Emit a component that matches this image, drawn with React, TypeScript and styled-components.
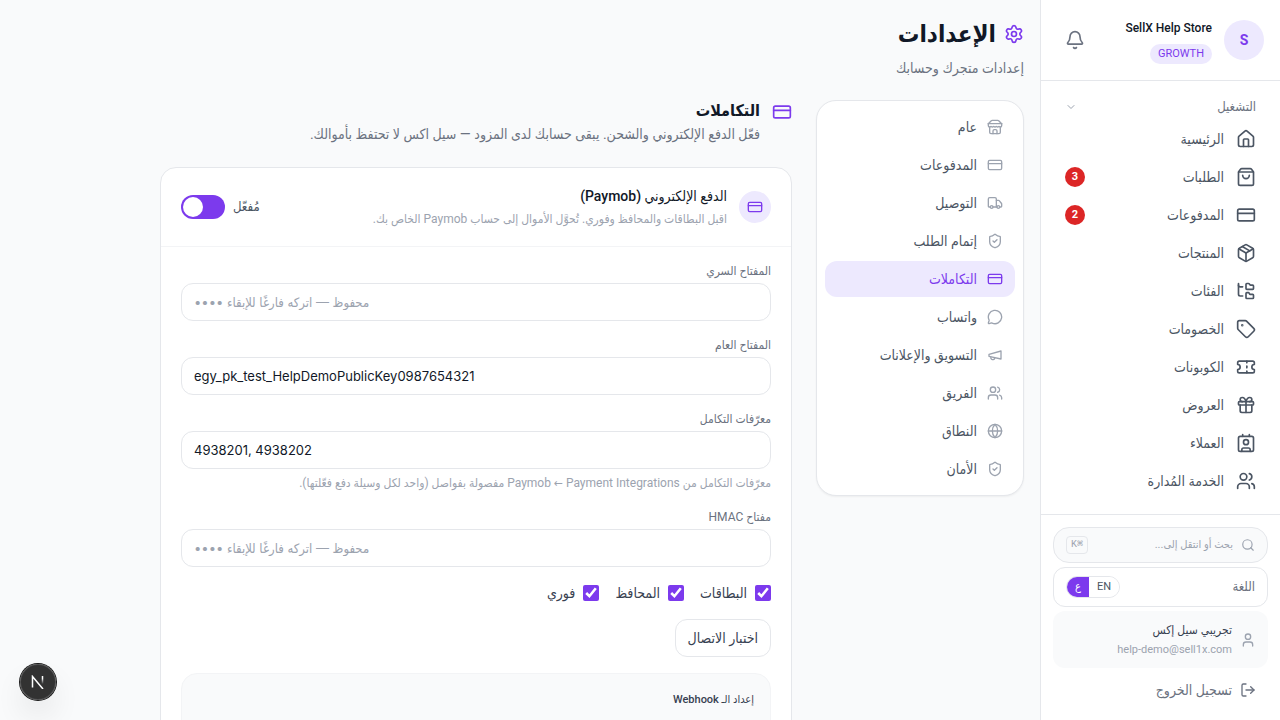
import React from 'react';
import styled, { createGlobalStyle } from 'styled-components';
import {
  Bell,
  ChevronDown,
  Contact,
  CreditCard,
  FolderTree,
  Gift,
  Globe,
  House,
  LogOut,
  MessageCircle,
  Package,
  Search,
  Settings,
  ShieldCheck,
  ShoppingBag,
  Tag,
  Ticket,
  Truck,
  User,
  Users,
} from 'lucide-react';

const violet = '#7c3aed';
const violetSoft = '#ede9fe';
const ink = '#111827';
const gray700 = '#374151';
const gray600 = '#4b5563';
const gray500 = '#6b7280';
const gray400 = '#9ca3af';
const line = '#e5e7eb';
const surface = '#f9fafb';

const GlobalStyle = createGlobalStyle`
  *, *::before, *::after { box-sizing: border-box; }
  body {
    margin: 0;
    background: ${surface};
    color: ${ink};
    font-family: Roboto, 'DejaVu Sans Condensed', 'DejaVu Sans', sans-serif;
    font-size: 14px;
    line-height: 20px;
  }
  button, input { font: inherit; color: inherit; }
  h1, h2, h3, h4, p, ul { margin: 0; padding: 0; }
  ul { list-style: none; }
  a { color: inherit; text-decoration: none; }
`;

type IconProps = { size?: number };

const StrokeIcon = ({ size = 16, children }: IconProps & { children: React.ReactNode }) => (
  <svg
    width={size}
    height={size}
    viewBox="0 0 24 24"
    fill="none"
    stroke="currentColor"
    strokeWidth="2"
    strokeLinecap="round"
    strokeLinejoin="round"
    aria-hidden="true"
  >
    {children}
  </svg>
);

const StoreIcon = ({ size }: IconProps) => (
  <StrokeIcon size={size}>
    <path d="m2 7 4.41-4.41A2 2 0 0 1 7.83 2h8.34a2 2 0 0 1 1.42.59L22 7" />
    <path d="M4 12v8a2 2 0 0 0 2 2h12a2 2 0 0 0 2-2v-8" />
    <path d="M15 22v-4a2 2 0 0 0-2-2h-2a2 2 0 0 0-2 2v4" />
    <path d="M2 7h20" />
    <path d="M22 7v3a2 2 0 0 1-2 2a2.7 2.7 0 0 1-1.59-.63.7.7 0 0 0-.82 0A2.7 2.7 0 0 1 16 12a2.7 2.7 0 0 1-1.59-.63.7.7 0 0 0-.82 0A2.7 2.7 0 0 1 12 12a2.7 2.7 0 0 1-1.59-.63.7.7 0 0 0-.82 0A2.7 2.7 0 0 1 8 12a2.7 2.7 0 0 1-1.59-.63.7.7 0 0 0-.82 0A2.7 2.7 0 0 1 4 12a2 2 0 0 1-2-2V7" />
  </StrokeIcon>
);

const MegaphoneIcon = ({ size }: IconProps) => (
  <StrokeIcon size={size}>
    <path d="m3 11 18-5v12L3 14v-3z" />
    <path d="M11.6 16.8a3 3 0 1 1-5.8-1.6" />
  </StrokeIcon>
);

const Shell = styled.div`
  display: flex;
  height: 100vh;
  overflow: hidden;
`;

const Sidebar = styled.aside`
  flex: 0 0 240px;
  display: flex;
  flex-direction: column;
  background: #fff;
  border-left: 1px solid ${line};
`;

const StoreHeader = styled.header`
  display: flex;
  align-items: center;
  gap: 12px;
  padding: 16px 16px 16px 20px;
  height: 81px;
  border-bottom: 1px solid ${line};
`;

const Avatar = styled.span`
  display: grid;
  place-items: center;
  width: 40px;
  height: 40px;
  border-radius: 50%;
  background: ${violetSoft};
  color: ${violet};
  font-weight: 700;
`;

const StoreMeta = styled.div`
  flex: 1;
  display: flex;
  flex-direction: column;
  align-items: flex-start;
  gap: 4px;
`;

const StoreName = styled.strong`
  font-size: 12px;
  line-height: 24px;
  font-weight: 500;
`;

const Plan = styled.span`
  padding: 0 8px;
  border-radius: 10px;
  background: ${violetSoft};
  color: ${violet};
  font-size: 11px;
`;

const BellButton = styled.button`
  display: grid;
  place-items: center;
  width: 28px;
  height: 28px;
  padding: 0;
  border: 0;
  background: none;
  color: ${gray500};
`;

const MainNav = styled.nav`
  flex: 1;
  min-height: 0;
  overflow: hidden;
  padding: 12px;
`;

const GroupToggle = styled.button`
  display: flex;
  align-items: center;
  justify-content: space-between;
  width: 100%;
  height: 28px;
  padding: 0 12px;
  border: 0;
  background: none;
  color: ${gray500};
  font-size: 13px;
  svg { color: ${gray400}; }
`;

const NavList = styled.ul`
  display: flex;
  flex-direction: column;
  gap: 2px;
`;

const NavLink = styled.a`
  display: flex;
  align-items: center;
  gap: 12px;
  height: 36px;
  padding: 0 12px;
  border-radius: 12px;
  color: ${gray600};
`;

const Count = styled.span`
  display: grid;
  place-items: center;
  width: 20px;
  height: 20px;
  margin-right: auto;
  border-radius: 50%;
  background: #dc2626;
  color: #fff;
  font-size: 11px;
  font-weight: 700;
`;

const SidebarFooter = styled.footer`
  display: flex;
  flex-direction: column;
  gap: 4px;
  padding: 12px;
  border-top: 1px solid ${line};
`;

const SearchButton = styled.button`
  display: flex;
  align-items: center;
  gap: 8px;
  height: 36px;
  padding: 0 12px;
  border: 1px solid ${line};
  border-radius: 16px;
  background: ${surface};
  color: ${gray400};
  font-size: 11px;
`;

const Shortcut = styled.kbd`
  display: grid;
  place-items: center;
  height: 18px;
  margin-right: auto;
  padding: 0 4px;
  border: 1px solid ${line};
  border-radius: 4px;
  font-family: 'Liberation Mono', 'DejaVu Sans Mono', monospace;
  font-size: 10px;
  line-height: 16px;
`;

const LanguageRow = styled.div`
  display: flex;
  align-items: center;
  justify-content: space-between;
  height: 40px;
  padding: 0 12px;
  border: 1px solid ${line};
  border-radius: 12px;
  color: ${gray500};
  font-size: 13px;
`;

const LanguageSwitch = styled.div`
  display: flex;
  height: 22px;
  border: 1px solid ${line};
  border-radius: 11px;
  overflow: hidden;
`;

const LanguageOption = styled.button<{ $on?: boolean }>`
  padding: 0 8px;
  border: 0;
  background: ${({ $on }) => ($on ? violet : '#fff')};
  color: ${({ $on }) => ($on ? '#fff' : gray600)};
  font-size: 11px;
  line-height: 20px;
`;

const Account = styled.div`
  display: flex;
  align-items: center;
  gap: 8px;
  height: 57px;
  padding: 0 12px;
  border-radius: 12px;
  background: ${surface};
  color: ${gray400};
  font-size: 11px;
`;

const AccountName = styled.p`
  color: ${gray700};
  font-size: 12px;
  font-weight: 500;
`;

const LogoutButton = styled.button`
  display: flex;
  align-items: center;
  gap: 8px;
  height: 36px;
  padding: 0 12px;
  border: 0;
  background: none;
  color: ${gray500};
`;

const Main = styled.main`
  flex: 1;
  min-width: 0;
  overflow: hidden;
`;

const Page = styled.div`
  max-width: 896px;
  padding: 16px;
`;

const PageTitle = styled.h1`
  display: flex;
  align-items: center;
  gap: 8px;
  font-size: 24px;
  line-height: 36px;
  font-weight: 700;
  svg { color: ${violet}; }
`;

const PageLead = styled.p`
  margin: 6px 0 22px;
  color: ${gray500};
`;

const Columns = styled.div`
  display: flex;
  align-items: flex-start;
  gap: 24px;
`;

const Tabs = styled.nav`
  flex: 0 0 208px;
  padding: 8px;
  border: 1px solid ${line};
  border-radius: 20px;
  background: #fff;
  box-shadow: 0 1px 2px rgba(0, 0, 0, 0.05);
`;

const TabLink = styled.a<{ $active?: boolean }>`
  display: flex;
  align-items: center;
  gap: 10px;
  height: 36px;
  padding: 0 12px;
  border-radius: 12px;
  background: ${({ $active }) => ($active ? violetSoft : 'transparent')};
  color: ${({ $active }) => ($active ? violet : gray600)};
  svg { color: ${({ $active }) => ($active ? violet : gray400)}; }
`;

const Content = styled.section`
  flex: 1;
  min-width: 0;
`;

const SectionHeader = styled.header`
  display: flex;
  gap: 12px;
  margin-bottom: 20px;
  svg { margin-top: 2px; color: ${violet}; }
`;

const SectionTitle = styled.h2`
  font-size: 16px;
  line-height: 22px;
  font-weight: 700;
`;

const SectionLead = styled.p`
  line-height: 25px;
  color: ${gray500};
`;

const Card = styled.section`
  border: 1px solid ${line};
  border-radius: 16px;
  background: #fff;
`;

const CardHeader = styled.header`
  display: flex;
  align-items: center;
  gap: 12px;
  height: 79px;
  padding: 0 20px;
  border-bottom: 1px solid #f3f4f6;
`;

const CardIcon = styled.span`
  display: grid;
  place-items: center;
  width: 32px;
  height: 32px;
  border-radius: 50%;
  background: ${violetSoft};
  color: ${violet};
`;

const CardHeading = styled.div`
  flex: 1;
`;

const CardTitle = styled.h3`
  font-size: 14px;
  line-height: 24px;
  font-weight: 500;
`;

const CardLead = styled.p`
  line-height: 22px;
  font-size: 12px;
  color: ${gray400};
`;

const ToggleLabel = styled.label`
  display: flex;
  align-items: center;
  gap: 8px;
  color: ${gray600};
  font-size: 13px;
`;

const Toggle = styled.input`
  appearance: none;
  display: flex;
  align-items: center;
  justify-content: flex-start;
  width: 44px;
  height: 24px;
  margin: 0;
  padding: 2px;
  border-radius: 12px;
  background: #d1d5db;
  &::before {
    content: '';
    width: 20px;
    height: 20px;
    border-radius: 50%;
    background: #fff;
  }
  &:checked {
    justify-content: flex-end;
    background: ${violet};
  }
`;

const CardBody = styled.div`
  display: flex;
  flex-direction: column;
  align-items: flex-start;
  gap: 16px;
  padding: 16px 20px 20px;
`;

const FieldBox = styled.div`
  display: flex;
  flex-direction: column;
  gap: 4px;
  width: 100%;
`;

const FieldLabel = styled.label`
  font-size: 12px;
  line-height: 16px;
  color: ${gray500};
`;

const TextInput = styled.input`
  width: 100%;
  height: 38px;
  padding: 0 12px;
  border: 1px solid ${line};
  border-radius: 12px;
  background: #fff;
  color: ${ink};
  font-family: Inter, 'DejaVu Sans Condensed', sans-serif;
  font-size: 13px;
  text-align: left;
  &::placeholder { color: ${gray400}; opacity: 1; }
`;

const Hint = styled.p`
  line-height: 20px;
  font-size: 12px;
  color: ${gray400};
`;

const Checks = styled.div`
  display: flex;
  gap: 16px;
`;

const CheckLabel = styled.label`
  display: flex;
  align-items: center;
  gap: 8px;
  color: ${gray700};
`;

const Checkbox = styled.input`
  width: 16px;
  height: 16px;
  margin: 0;
  accent-color: ${violet};
`;

const TestButton = styled.button`
  height: 38px;
  padding: 0 12px;
  border: 1px solid ${line};
  border-radius: 12px;
  background: #fff;
  color: ${gray700};
`;

const Webhook = styled.section`
  width: 100%;
  min-height: 120px;
  padding: 16px;
  border: 1px solid #f3f4f6;
  border-radius: 16px;
  background: ${surface};
`;

const WebhookTitle = styled.h4`
  font-size: 11px;
  line-height: 20px;
  font-weight: 500;
  color: ${gray700};
`;

const DevBadge = styled.button`
  position: fixed;
  left: 20px;
  bottom: 20px;
  display: grid;
  place-items: center;
  width: 36px;
  height: 36px;
  padding: 0;
  border: 0;
  border-radius: 50%;
  background: rgba(0, 0, 0, 0.8);
  box-shadow: 0 0 0 1px #171717, inset 0 0 0 1px rgba(255, 255, 255, 0.14),
    0 16px 32px -8px rgba(0, 0, 0, 0.24);
`;

const navItems = [
  { label: 'الرئيسية', Icon: House },
  { label: 'الطلبات', Icon: ShoppingBag, count: 3 },
  { label: 'المدفوعات', Icon: CreditCard, count: 2 },
  { label: 'المنتجات', Icon: Package },
  { label: 'الفئات', Icon: FolderTree },
  { label: 'الخصومات', Icon: Tag },
  { label: 'الكوبونات', Icon: Ticket },
  { label: 'العروض', Icon: Gift },
  { label: 'العملاء', Icon: Contact },
  { label: 'الخدمة المُدارة', Icon: Users },
];

const tabs = [
  { label: 'عام', Icon: StoreIcon },
  { label: 'المدفوعات', Icon: CreditCard },
  { label: 'التوصيل', Icon: Truck },
  { label: 'إتمام الطلب', Icon: ShieldCheck },
  { label: 'التكاملات', Icon: CreditCard, active: true },
  { label: 'واتساب', Icon: MessageCircle },
  { label: 'التسويق والإعلانات', Icon: MegaphoneIcon },
  { label: 'الفريق', Icon: Users },
  { label: 'النطاق', Icon: Globe },
  { label: 'الأمان', Icon: ShieldCheck },
];

const savedPlaceholder = '•••• محفوظ — اتركه فارغًا للإبقاء';

type FieldProps = {
  id: string;
  label: string;
  value?: string;
  placeholder?: string;
  hint?: string;
};

const Field = ({ id, label, value, placeholder, hint }: FieldProps) => (
  <FieldBox>
    <FieldLabel htmlFor={id}>{label}</FieldLabel>
    <TextInput id={id} dir="ltr" defaultValue={value} placeholder={placeholder} />
    {hint && <Hint>{hint}</Hint>}
  </FieldBox>
);

export default function App() {
  return (
    <>
      <GlobalStyle />
      <Shell dir="rtl" lang="ar">
        <Sidebar>
          <StoreHeader>
            <Avatar>S</Avatar>
            <StoreMeta>
              <StoreName>SellX Help Store</StoreName>
              <Plan>GROWTH</Plan>
            </StoreMeta>
            <BellButton aria-label="الإشعارات">
              <Bell size={20} />
            </BellButton>
          </StoreHeader>
          <MainNav>
            <GroupToggle>
              التشغيل
              <ChevronDown size={12} />
            </GroupToggle>
            <NavList>
              {navItems.map(({ label, Icon, count }) => (
                <li key={label}>
                  <NavLink href="#">
                    <Icon size={20} />
                    {label}
                    {count && <Count>{count}</Count>}
                  </NavLink>
                </li>
              ))}
            </NavList>
          </MainNav>
          <SidebarFooter>
            <SearchButton>
              <Search size={14} />
              بحث أو انتقل إلى...
              <Shortcut>⌘K</Shortcut>
            </SearchButton>
            <LanguageRow>
              اللغة
              <LanguageSwitch>
                <LanguageOption>EN</LanguageOption>
                <LanguageOption $on>ع</LanguageOption>
              </LanguageSwitch>
            </LanguageRow>
            <Account>
              <User size={16} />
              <div>
                <AccountName>تجريبي سيل إكس</AccountName>
                <p>help-demo@sell1x.com</p>
              </div>
            </Account>
            <LogoutButton>
              <LogOut size={16} />
              تسجيل الخروج
            </LogoutButton>
          </SidebarFooter>
        </Sidebar>
        <Main>
          <Page>
            <PageTitle>
              <Settings size={20} />
              الإعدادات
            </PageTitle>
            <PageLead>إعدادات متجرك وحسابك</PageLead>
            <Columns>
              <Tabs>
                <NavList>
                  {tabs.map(({ label, Icon, active }) => (
                    <li key={label}>
                      <TabLink href="#" $active={active}>
                        <Icon size={16} />
                        {label}
                      </TabLink>
                    </li>
                  ))}
                </NavList>
              </Tabs>
              <Content>
                <SectionHeader>
                  <CreditCard size={20} />
                  <div>
                    <SectionTitle>التكاملات</SectionTitle>
                    <SectionLead>
                      فعّل الدفع الإلكتروني والشحن. يبقى حسابك لدى المزود — سيل اكس لا تحتفظ بأموالك.
                    </SectionLead>
                  </div>
                </SectionHeader>
                <Card>
                  <CardHeader>
                    <CardIcon>
                      <CreditCard size={16} />
                    </CardIcon>
                    <CardHeading>
                      <CardTitle>الدفع الإلكتروني (Paymob)</CardTitle>
                      <CardLead>
                        اقبل البطاقات والمحافظ وفوري. تُحوَّل الأموال إلى حساب Paymob الخاص بك.
                      </CardLead>
                    </CardHeading>
                    <ToggleLabel>
                      مُفعّل
                      <Toggle type="checkbox" role="switch" defaultChecked />
                    </ToggleLabel>
                  </CardHeader>
                  <CardBody>
                    <Field id="secret-key" label="المفتاح السري" placeholder={savedPlaceholder} />
                    <Field id="public-key" label="المفتاح العام" value="egy_pk_test_HelpDemoPublicKey0987654321" />
                    <Field
                      id="integration-ids"
                      label="معرّفات التكامل"
                      value="4938201, 4938202"
                      hint="معرّفات التكامل من Paymob ← Payment Integrations مفصولة بفواصل (واحد لكل وسيلة دفع فعّلتها)."
                    />
                    <Field id="hmac-key" label="مفتاح HMAC" placeholder={savedPlaceholder} />
                    <Checks>
                      {['البطاقات', 'المحافظ', 'فوري'].map((method) => (
                        <CheckLabel key={method}>
                          <Checkbox type="checkbox" defaultChecked />
                          {method}
                        </CheckLabel>
                      ))}
                    </Checks>
                    <TestButton>اختبار الاتصال</TestButton>
                    <Webhook>
                      <WebhookTitle>إعداد الـ Webhook</WebhookTitle>
                    </Webhook>
                  </CardBody>
                </Card>
              </Content>
            </Columns>
          </Page>
        </Main>
        <DevBadge aria-label="Next.js">
          <svg width="14" height="14" viewBox="0 0 14 14" fill="none" aria-hidden="true">
            <defs>
              <linearGradient id="stem" x1="0" y1="1" x2="0" y2="9" gradientUnits="userSpaceOnUse">
                <stop offset="0.3" stopColor="#fff" />
                <stop offset="1" stopColor="#fff" stopOpacity="0" />
              </linearGradient>
            </defs>
            <path d="M1.5 12.5V1.5L12 14" stroke="#fff" strokeWidth="1.5" />
            <path d="M11.5 1v9" stroke="url(#stem)" strokeWidth="1.5" />
          </svg>
        </DevBadge>
      </Shell>
    </>
  );
}
